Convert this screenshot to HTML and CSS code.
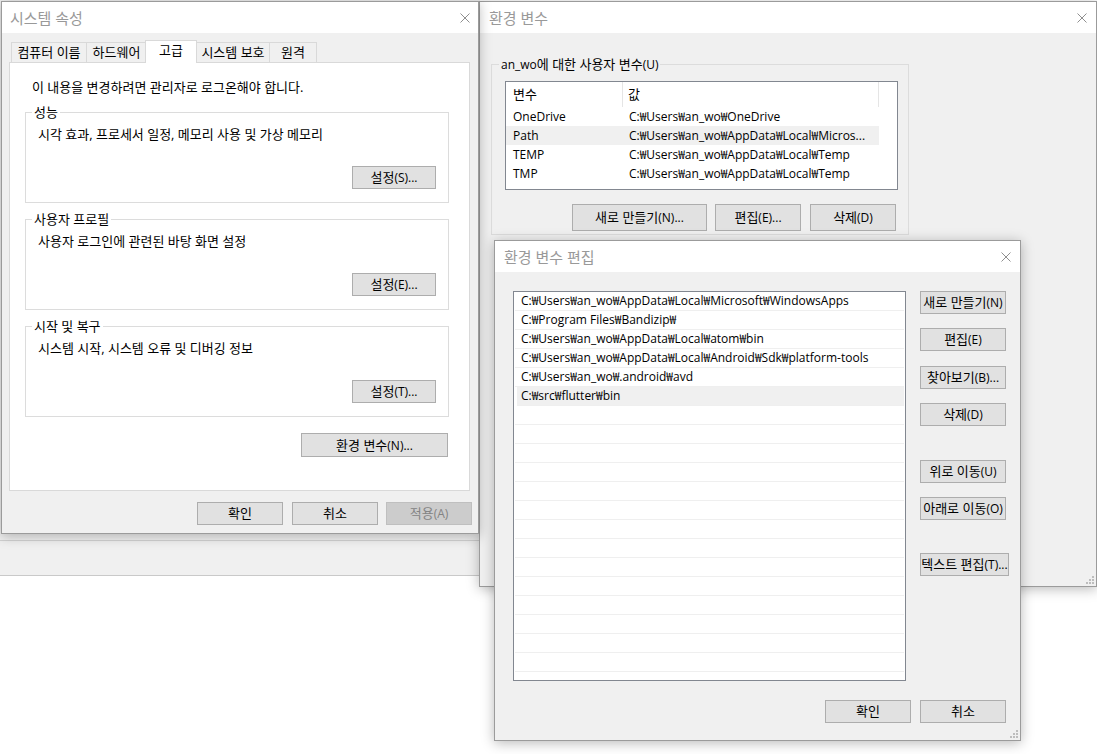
FILE: index.html
```html
<!DOCTYPE html>
<html lang="ko">
<head>
<meta charset="utf-8">
<title>환경 변수 편집</title>
<link rel="stylesheet" href="styles.css">
</head>
<body>
<div class="desk">

  <div class="bgwin"><div class="bgwin-status"></div></div>

  <section class="win win-env">
    <header class="titlebar">
      <span class="title">환경 변수</span>
      <svg class="close" viewBox="0 0 10 10"><path d="M0.5 0.5L9.5 9.5M9.5 0.5L0.5 9.5"/></svg>
    </header>
    <div class="env-body">
      <div class="group env-group">
        <span class="legend"><span class="l">an_wo</span>에 대한 사용자 변수<span class="l">(U)</span></span>
        <div class="listview">
          <div class="lv-head"><span class="c1">변수</span><span class="c2">값</span></div>
          <div class="lv-row"><span class="c1">OneDrive</span><span class="c2">C:₩Users₩an_wo₩OneDrive</span></div>
          <div class="lv-row sel"><span class="c1">Path</span><span class="c2">C:₩Users₩an_wo₩AppData₩Local₩Micros...</span></div>
          <div class="lv-row"><span class="c1">TEMP</span><span class="c2">C:₩Users₩an_wo₩AppData₩Local₩Temp</span></div>
          <div class="lv-row"><span class="c1">TMP</span><span class="c2">C:₩Users₩an_wo₩AppData₩Local₩Temp</span></div>
        </div>
        <div class="env-btns">
          <button class="btn tall w135">새로 만들기<span class="l">(N)...</span></button>
          <button class="btn tall w86 gap9">편집<span class="l">(E)...</span></button>
          <button class="btn tall w86">삭제<span class="l">(D)</span></button>
        </div>
      </div>
    </div>
    <svg class="grip" viewBox="0 0 8 8"><rect x="6" y="0" width="2" height="2"/><rect x="3" y="3" width="2" height="2"/><rect x="6" y="3" width="2" height="2"/><rect x="0" y="6" width="2" height="2"/><rect x="3" y="6" width="2" height="2"/><rect x="6" y="6" width="2" height="2"/></svg>
  </section>

  <section class="win win-sys">
    <header class="titlebar sys-title">
      <span class="title">시스템 속성</span>
      <svg class="close" viewBox="0 0 10 10"><path d="M0.5 0.5L9.5 9.5M9.5 0.5L0.5 9.5"/></svg>
    </header>
    <div class="sys-body">
      <nav class="tabs">
        <span class="tab t1">컴퓨터 이름</span>
        <span class="tab t2">하드웨어</span>
        <span class="tab t3 on">고급</span>
        <span class="tab t4">시스템 보호</span>
        <span class="tab t5">원격</span>
      </nav>
      <div class="panel">
        <p class="notice">이 내용을 변경하려면 관리자로 로그온해야 합니다.</p>
        <div class="group sys-group first">
          <span class="legend">성능</span>
          <span class="group-text">시각 효과, 프로세서 일정, 메모리 사용 및 가상 메모리</span>
          <button class="btn w84 grp-btn">설정<span class="l">(S)...</span></button>
        </div>
        <div class="group sys-group">
          <span class="legend">사용자 프로필</span>
          <span class="group-text">사용자 로그인에 관련된 바탕 화면 설정</span>
          <button class="btn w84 grp-btn">설정<span class="l">(E)...</span></button>
        </div>
        <div class="group sys-group">
          <span class="legend">시작 및 복구</span>
          <span class="group-text">시스템 시작, 시스템 오류 및 디버깅 정보</span>
          <button class="btn w84 grp-btn">설정<span class="l">(T)...</span></button>
        </div>
        <button class="btn envvar-btn">환경 변수<span class="l">(N)...</span></button>
      </div>
      <div class="sys-footer">
        <button class="btn w86 gap9">확인</button>
        <button class="btn w86">취소</button>
        <button class="btn w86 dis">적용<span class="l">(A)</span></button>
      </div>
    </div>
  </section>

  <section class="win win-edit">
    <header class="titlebar">
      <span class="title">환경 변수 편집</span>
      <svg class="close" viewBox="0 0 10 10"><path d="M0.5 0.5L9.5 9.5M9.5 0.5L0.5 9.5"/></svg>
    </header>
    <div class="edit-body">
      <div class="edit-main">
        <div class="edit-list">
          <div class="er">C:₩Users₩an_wo₩AppData₩Local₩Microsoft₩WindowsApps</div>
          <div class="er">C:₩Program Files₩Bandizip₩</div>
          <div class="er">C:₩Users₩an_wo₩AppData₩Local₩atom₩bin</div>
          <div class="er">C:₩Users₩an_wo₩AppData₩Local₩Android₩Sdk₩platform-tools</div>
          <div class="er">C:₩Users₩an_wo₩.android₩avd</div>
          <div class="er sel">C:₩src₩flutter₩bin</div>
          <div class="er"></div><div class="er"></div><div class="er"></div><div class="er"></div>
          <div class="er"></div><div class="er"></div><div class="er"></div><div class="er"></div>
          <div class="er"></div><div class="er"></div><div class="er"></div><div class="er"></div>
          <div class="er"></div><div class="er"></div>
        </div>
        <div class="edit-btns">
          <button class="btn w86">새로 만들기<span class="l">(N)</span></button>
          <button class="btn w86 m14">편집<span class="l">(E)</span></button>
          <button class="btn w86 m15">찾아보기<span class="l">(B)...</span></button>
          <button class="btn w86 m14">삭제<span class="l">(D)</span></button>
          <button class="btn w86 m34">위로 이동<span class="l">(U)</span></button>
          <button class="btn w86 m14">아래로 이동<span class="l">(O)</span></button>
          <button class="btn w89 m33">텍스트 편집<span class="l">(T)...</span></button>
        </div>
      </div>
      <div class="edit-footer">
        <button class="btn w86 gap9">확인</button>
        <button class="btn w86">취소</button>
      </div>
    </div>
    <svg class="grip" viewBox="0 0 8 8"><rect x="6" y="0" width="2" height="2"/><rect x="3" y="3" width="2" height="2"/><rect x="6" y="3" width="2" height="2"/><rect x="0" y="6" width="2" height="2"/><rect x="3" y="6" width="2" height="2"/><rect x="6" y="6" width="2" height="2"/></svg>
  </section>

</div>
</body>
</html>
```

FILE: styles.css
```css
* { box-sizing: border-box; }
html, body { margin: 0; padding: 0; }
body {
  width: 1097px;
  height: 754px;
  overflow: hidden;
  background: #fff;
  font-family: "Open Sans", "Noto Sans CJK KR", sans-serif;
  font-size: 13px;
  line-height: 16px;
  color: #000;
}
p { margin: 0; }
.l { font-size: 12px; }

.desk { position: relative; width: 1097px; height: 754px; }

/* background window behind system properties */
.bgwin {
  position: absolute;
  left: 0; top: 0;
  width: 480px; height: 576px;
  background: #f0f0f0;
  border-bottom: 1px solid #c9c9c9;
  display: flex;
  flex-direction: column;
  justify-content: flex-end;
}
.bgwin-status { height: 35px; border-top: 1px solid #d2d2d2; }

/* generic window */
.win {
  position: absolute;
  display: flex;
  flex-direction: column;
  background: #f0f0f0;
  border: 1px solid #9b9b9b;
  box-shadow: 0 2px 12px rgba(0, 0, 0, 0.28);
}
.win-env  { left: 479px; top: 1px; width: 618px; height: 586px; z-index: 2; }
.win-sys  { left: 1px;   top: 1px; width: 478px; height: 533px; z-index: 3; }
.win-edit { left: 494px; top: 240px; width: 527px; height: 501px; z-index: 4; }

.titlebar {
  flex: none;
  height: 31px;
  background: #fff;
  display: flex;
  align-items: center;
  justify-content: space-between;
  padding: 0 9px 0 9px;
}
.sys-title { padding: 0 8px 0 8px; }
.title { font-size: 15px; color: #999; line-height: 18px; }
.close { width: 10px; height: 10px; }
.close path { stroke: #8f8f8f; stroke-width: 1; fill: none; }

.grip { position: absolute; right: 2px; bottom: 2px; width: 8px; height: 8px; }
.grip rect { fill: #bdbdbd; }

/* buttons */
.btn {
  flex: none;
  height: 23px;
  padding: 0;
  margin: 0;
  border: 1px solid #adadad;
  background: #e1e1e1;
  font: inherit;
  color: #000;
  line-height: 21px;
  text-align: center;
  white-space: nowrap;
}
.btn.tall { height: 27px; line-height: 25px; }
.btn.dis { background: #cccccc; border-color: #bfbfbf; color: #838383; }
.w84 { width: 84px; }
.w86 { width: 86px; }
.w89 { width: 89px; }
.w135 { width: 135px; }

/* group boxes */
.group {
  border: 1px solid #dcdcdc;
  display: flex;
  flex-direction: column;
  align-items: flex-start;
}
.legend {
  margin: -9px 0 0 6px;
  padding: 0 2px;
  line-height: 16px;
  background: #fff;
}

/* ---------- system properties ---------- */
.sys-body {
  flex: 1;
  display: flex;
  flex-direction: column;
  padding: 7px 6px 8px 7px;
}
.tabs {
  display: flex;
  align-items: flex-end;
  height: 22px;
  padding-left: 2px;
  position: relative;
  z-index: 1;
}
.tab {
  height: 20px;
  border: 1px solid #d9d9d9;
  border-bottom: none;
  background: #f0f0f0;
  text-align: center;
  line-height: 18px;
  margin-left: -1px;
  white-space: nowrap;
}
.tab.t1 { width: 76px; margin-left: 0; }
.tab.t2 { width: 61px; }
.tab.t3 { width: 52px; margin-left: -2px; }
.tab.t4 { width: 74px; }
.tab.t5 { width: 48px; }
.tab.on {
  height: 23px;
  margin-bottom: -1px;
  background: #fff;
  line-height: 19px;
}
.panel {
  height: 429px;
  margin-right: 2px;
  background: #fff;
  border: 1px solid #d9d9d9;
  display: flex;
  flex-direction: column;
  padding: 16px 20px 0 15px;
}
.notice { margin-left: 7px; }
.sys-group { margin-top: 16px; }
.sys-group.first { margin-top: 17px; }
.group-text { margin: 6px 0 0 12px; }
.grp-btn { align-self: flex-end; margin: 24px 12px 13px 0; }
.envvar-btn { align-self: flex-end; width: 147px; height: 24px; line-height: 22px; margin: 16px 1px 0 0; }
.sys-footer {
  display: flex;
  justify-content: flex-end;
  gap: 8px;
  margin-top: 11px;
}

/* ---------- environment variables ---------- */
.env-body { flex: 1; padding: 31px 0 0 11px; }
.env-group { width: 418px; padding-bottom: 3px; }
.env-group .legend { margin-left: 7px; background: #f0f0f0; }
.listview {
  width: 393px;
  height: 109px;
  margin: 8px 0 0 13px;
  border: 1px solid #828790;
  background: #fff;
}
.lv-head { display: flex; height: 25px; }
.lv-head span { height: 25px; line-height: 25px; border-right: 1px solid #e5e5e5; }
.lv-row { display: flex; width: 373px; height: 19px; line-height: 19px; white-space: nowrap; font-size: 12px; }
.lv-row.sel { background: #f0f0f0; }
.c1 { width: 117px; padding-left: 7px; flex: none; overflow: hidden; }
.c2 { width: 256px; padding-left: 6px; flex: none; overflow: hidden; }
.lv-head .c2 { padding-left: 5px; }
.env-btns {
  align-self: flex-end;
  display: flex;
  gap: 8px;
  margin: 14px 12px 0 0;
}
.gap9 { margin-right: 1px; }

/* ---------- edit window ---------- */
.edit-body {
  flex: 1;
  display: flex;
  flex-direction: column;
  padding: 19px 14px 17px 18px;
}
.edit-main { display: flex; gap: 14px; align-items: flex-start; }
.edit-list {
  flex: none;
  width: 393px;
  height: 390px;
  border: 1px solid #828790;
  background: #fff;
  padding: 0 1px;
}
.er {
  height: 19px;
  line-height: 18px;
  padding-left: 6px;
  border-bottom: 1px solid #efefef;
  white-space: nowrap;
  font-size: 12px;
}
.er.sel { background: #f0f0f0; margin-left: 2px; padding-left: 4px; }
.edit-btns { display: flex; flex-direction: column; align-items: flex-start; }
.m14 { margin-top: 14px; }
.m15 { margin-top: 15px; }
.m33 { margin-top: 33px; }
.m34 { margin-top: 34px; }
.edit-footer {
  display: flex;
  justify-content: flex-end;
  gap: 8px;
  margin-top: 19px;
}
```
